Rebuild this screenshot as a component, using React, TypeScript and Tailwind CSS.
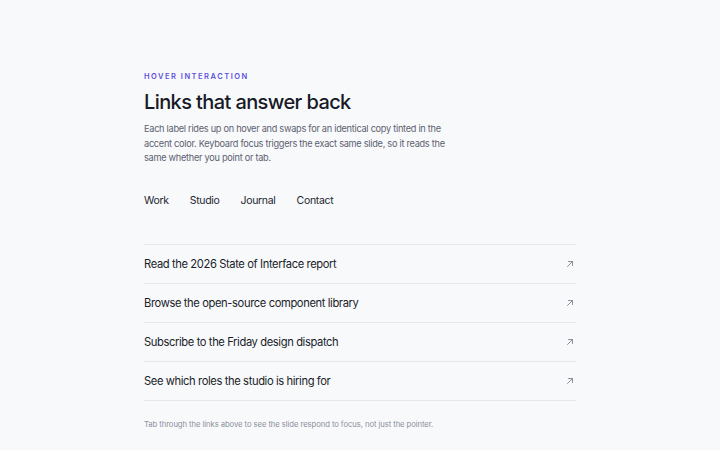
import React from "react";

const navItems = ["Work", "Studio", "Journal", "Contact"];
const links = [
  "Read the 2026 State of Interface report",
  "Browse the open-source component library",
  "Subscribe to the Friday design dispatch",
  "See which roles the studio is hiring for",
];

function ArrowUpRight() {
  return (
    <svg width="8" height="8" viewBox="0 0 8 8" fill="none" stroke="currentColor" strokeWidth="1" strokeLinecap="round" strokeLinejoin="round">
      <path d="M1.5 6.5L6.5 1.5" />
      <path d="M2.5 1.5H6.5V5.5" />
    </svg>
  );
}

export default function App() {
  return (
    <div
      className="min-h-[450px] w-full bg-[#f8f9fb] text-[#1c1f2a]"
      style={{ fontFamily: "Inter, 'Noto Sans', sans-serif" }}
    >
      <div className="mx-auto w-[432px] pt-[72px]">
        <p className="text-[7.5px] font-semibold uppercase tracking-[0.2em] text-[#5b50e0] leading-[9px]">
          Hover interaction
        </p>
        <h1 className="mt-[8px] text-[20px] font-medium leading-[26px] tracking-[-0.03em] text-[#171a26]">
          Links that answer back
        </h1>
        <p className="mt-[7px] w-[310px] text-[9.2px] leading-[14.6px] tracking-[-0.03em] text-[#5c6170]">
          Each label rides up on hover and swaps for an identical copy tinted in the accent color.
          Keyboard focus triggers the exact same slide, so it reads the same whether you point or tab.
        </p>
        <nav className="mt-[28px] flex gap-[21px] text-[10.5px] leading-[14px] tracking-[-0.03em] text-[#23262f]">
          {navItems.map((n) => (
            <a key={n} href="#" className="block">
              {n}
            </a>
          ))}
        </nav>
        <ul className="mt-[36px] border-t border-[#e3e6eb]">
          {links.map((l) => (
            <li key={l} className="border-b border-[#e3e6eb]">
              <a href="#" className="flex h-[38px] items-center justify-between pt-[1px] text-[11.2px] tracking-[-0.035em] text-[#1a1d2a]">
                <span>{l}</span>
                <span className="mr-[2px] text-[#8a8f9c]">
                  <ArrowUpRight />
                </span>
              </a>
            </li>
          ))}
        </ul>
        <p className="mt-[19px] text-[7.7px] leading-[10px] tracking-[-0.01em] text-[#8a8f9c]">
          Tab through the links above to see the slide respond to focus, not just the pointer.
        </p>
      </div>
    </div>
  );
}
